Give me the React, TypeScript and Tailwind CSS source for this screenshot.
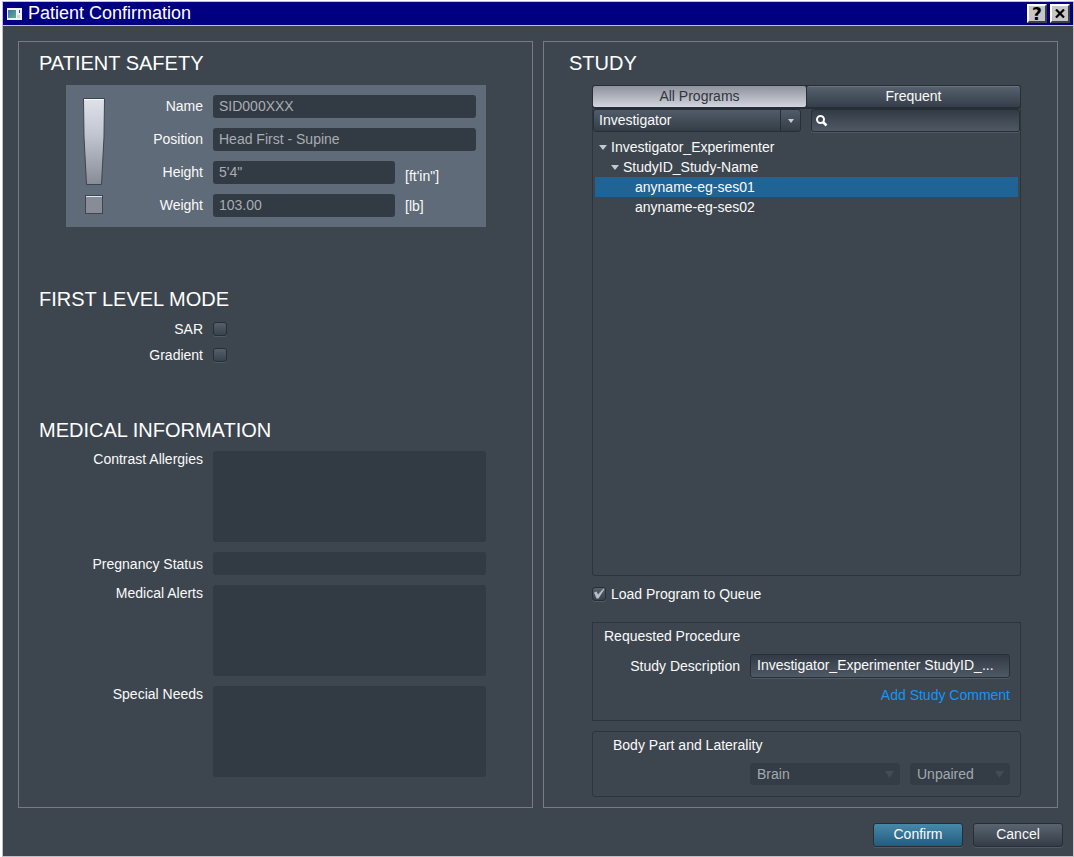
import { useState } from "react";
import type { ReactNode } from "react";

const readOnlyField =
  "h-[23px] w-full min-w-0 rounded-[3px] bg-[#323b44] px-1.5 pb-0.5 text-[#a9adb2] outline-none";

function Heading({ children }: { children: ReactNode }) {
  return <h2 className="text-xl leading-7 font-normal text-white">{children}</h2>;
}

function AlertMark() {
  return (
    <svg width="24" height="120" viewBox="0 0 24 120" aria-hidden="true">
      <defs>
        <linearGradient id="mark" x1="0" y1="0" x2="0" y2="1">
          <stop offset="0" stopColor="#dfe2ea" />
          <stop offset="0.4" stopColor="#c3c7d2" />
          <stop offset="1" stopColor="#888c97" />
        </linearGradient>
      </defs>
      <path
        d="M1.5 3.5H22.500L22 42L19.500 89.500H4.500L2 42Z"
        fill="url(#mark)"
        stroke="#3d464f"
      />
      <path d="M2 4.500H22" stroke="#f6f7fa" />
      <rect x="3.500" y="100.500" width="17" height="18" fill="#888c97" stroke="#3d464f" />
      <path d="M4 101.500H20" stroke="#e3e5ea" />
    </svg>
  );
}

function SafetyField(props: { id: string; label: string; value: string; unit?: string; unitClass?: string }) {
  return (
    <div className="grid grid-cols-[127px_1fr] gap-2.5">
      <label htmlFor={props.id} className="text-right leading-[23px]">
        {props.label}
      </label>
      <div className={props.unit ? "grid grid-cols-[182px_1fr] gap-2.5" : "flex"}>
        <input id={props.id} readOnly value={props.value} className={readOnlyField} />
        {props.unit && <span className={props.unitClass}>{props.unit}</span>}
      </div>
    </div>
  );
}

function CheckBox({ id, initial = false }: { id: string; initial?: boolean }) {
  const [checked, setChecked] = useState(initial);
  return (
    <span className="relative flex size-3.5 shrink-0">
      <input
        id={id}
        type="checkbox"
        checked={checked}
        onChange={() => setChecked(!checked)}
        className="size-3.5 appearance-none rounded-[3px] border border-[#272e35] bg-linear-to-b from-[#56606d] to-[#38424c] shadow-[0_1px_0_#515a64]"
      />
      {checked && (
        <svg
          className="pointer-events-none absolute inset-0"
          width="14"
          height="14"
          viewBox="0 0 14 14"
          aria-hidden="true"
        >
          <path d="M2 5.500L4.500 4.500L6 7.500L11.500 1.500L12.500 2L6.500 11.500H4.500Z" fill="#b9bdc9" />
        </svg>
      )}
    </span>
  );
}

function MedicalArea({ id, label }: { id: string; label: string }) {
  return (
    <div className="grid grid-cols-[164px_1fr] gap-2.5">
      <label htmlFor={id} className="text-right">
        {label}
      </label>
      <textarea
        id={id}
        readOnly
        className="block h-[91px] w-full resize-none rounded-[3px] bg-[#323b44] p-1.5 outline-none"
      />
    </div>
  );
}

function TreeArrow() {
  return (
    <svg width="8" height="5" viewBox="0 0 8 5" aria-hidden="true" className="shrink-0">
      <path d="M0 0H8L4 5Z" fill="#c3c8d0" />
    </svg>
  );
}

function DisabledSelect({ label, option, className }: { label: string; option: string; className: string }) {
  return (
    <div className={className}>
      <select
        disabled
        aria-label={label}
        className="h-[22px] w-full appearance-none rounded-[3px] bg-[#343d46] px-[7px] text-[#a3a8ad] opacity-100"
      >
        <option>{option}</option>
      </select>
      <svg
        className="pointer-events-none absolute top-2 right-1.5"
        width="9"
        height="7"
        viewBox="0 0 9 7"
        aria-hidden="true"
      >
        <path d="M0 0H9L4.500 7Z" fill="#434c55" />
      </svg>
    </div>
  );
}

const sessions = ["anyname-eg-ses01", "anyname-eg-ses02"];

export default function App() {
  const [selected, setSelected] = useState(sessions[0]);
  const [tab, setTab] = useState("All Programs");

  return (
    <div className="flex min-h-screen flex-col bg-white pt-px pl-0.5 font-['Liberation_Sans',Arial,sans-serif] text-sm leading-4 text-[#fafafa]">
      <div className="flex grow flex-col border border-[#c0c1c8] bg-[#3d464f]">
        <header className="flex h-6 items-center border-b border-[#c0c1d8] bg-[#000080] pr-[3px] pl-1">
          <svg width="15" height="12" viewBox="0 0 15 12" aria-hidden="true">
            <defs>
              <linearGradient id="app" x1="0" y1="0" x2="1" y2="1">
                <stop offset="0" stopColor="#3c6fa8" />
                <stop offset="1" stopColor="#5fb487" />
              </linearGradient>
            </defs>
            <rect width="15" height="12" fill="#f2f2f4" />
            <rect x="1" y="2" width="8" height="8" fill="url(#app)" />
            <rect x="12" y="2" width="1" height="3" fill="#2f4f8f" />
            <rect x="10" y="7" width="3" height="3" fill="#d4d6da" />
          </svg>
          <h1 className="ml-1.5 grow pb-0.5 text-lg leading-5 text-white">Patient Confirmation</h1>
          <div className="flex gap-[3px]">
            <button
              aria-label="Help"
              className="flex h-[19px] w-5 items-center justify-center border-2 border-t-white border-r-[#404040] border-b-[#404040] border-l-white bg-[#c6c6c6] font-['DejaVu_Sans',sans-serif] text-[17px] leading-4 font-bold text-black"
            >
              ?
            </button>
            <button
              aria-label="Close"
              className="flex h-[19px] w-5 items-center justify-center border-2 border-t-white border-r-[#404040] border-b-[#404040] border-l-white bg-[#c6c6c6]"
            >
              <svg width="10" height="9" viewBox="0 0 10 9" aria-hidden="true">
                <path d="M1 0.500L9 8.500M9 0.500L1 8.500" stroke="#000" strokeWidth="2.200" />
              </svg>
            </button>
          </div>
        </header>

        <main className="grid grow grid-cols-2 gap-2.5 px-[15px] pt-[15px]">
          <div className="min-w-0 border border-[#777b7e] pt-[7px] pr-[46px] pb-[30px] pl-5">
            <section>
              <Heading>PATIENT SAFETY</Heading>
              <div className="mt-2 ml-[27px] flex bg-[#5f6b79] p-2.5 pl-4">
                <div className="w-0">
                  <AlertMark />
                </div>
                <div className="-ml-1.5 flex grow flex-col gap-2.5">
                  <SafetyField id="name" label="Name" value="SID000XXX" />
                  <SafetyField id="position" label="Position" value="Head First - Supine" />
                  <SafetyField id="height" label="Height" value={"5'4\""} unit={"[ft'in\"]"} unitClass="self-end" />
                  <SafetyField id="weight" label="Weight" value="103.00" unit="[lb]" unitClass="self-center" />
                </div>
              </div>
            </section>

            <section className="mt-[58px]">
              <Heading>FIRST LEVEL MODE</Heading>
              <div className="mt-2 flex flex-col gap-2.5">
                <div className="grid grid-cols-[164px_1fr] items-center gap-2.5">
                  <label htmlFor="sar" className="text-right">
                    SAR
                  </label>
                  <CheckBox id="sar" />
                </div>
                <div className="grid grid-cols-[164px_1fr] items-center gap-2.5">
                  <label htmlFor="gradient" className="text-right">
                    Gradient
                  </label>
                  <CheckBox id="gradient" />
                </div>
              </div>
            </section>

            <section className="mt-[53px]">
              <Heading>MEDICAL INFORMATION</Heading>
              <div className="mt-[7px] flex flex-col gap-2.5">
                <MedicalArea id="allergies" label="Contrast Allergies" />
                <div className="grid grid-cols-[164px_1fr] items-center gap-2.5">
                  <label htmlFor="pregnancy" className="text-right">
                    Pregnancy Status
                  </label>
                  <input id="pregnancy" readOnly className={readOnlyField} />
                </div>
                <MedicalArea id="alerts" label="Medical Alerts" />
                <MedicalArea id="needs" label="Special Needs" />
              </div>
            </section>
          </div>

          <section className="flex min-w-0 flex-col border border-[#777b7e] pt-[7px] pr-9 pb-2.5 pl-12">
            <div className="-ml-[23px]">
              <Heading>STUDY</Heading>
            </div>
            <div className="mt-2 flex h-6 gap-px rounded-[3px] border border-b-2 border-[#272e35] bg-[#272e35]">
              {["All Programs", "Frequent"].map((name) => (
                <button
                  key={name}
                  onClick={() => setTab(name)}
                  className={
                    tab === name
                      ? "flex-1 rounded-[2px] bg-linear-to-b from-[#8f919c] to-[#d3d6de] pb-px text-[#30363d]"
                      : "flex-1 rounded-[2px] border-t border-[#69727f] bg-linear-to-b from-[#56606e] to-[#353e48] pb-0.5"
                  }
                >
                  {name}
                </button>
              ))}
            </div>
            <div className="flex grow flex-col rounded-b-[3px] border border-t-0 border-[#2d353c]">
              <div className="flex gap-2.5">
                <div className="relative w-[208px] shrink-0">
                  <select
                    aria-label="Program owner"
                    className="block h-[23px] w-full appearance-none rounded-[3px] border border-[#272e35] bg-linear-to-b from-[#525c69] to-[#343d47] px-[5px] pb-0.5 text-[#fafafa]"
                  >
                    <option>Investigator</option>
                  </select>
                  <span className="pointer-events-none absolute top-px right-px bottom-px flex w-5 items-center justify-center border-l border-[#272e35]">
                    <svg width="6" height="4" viewBox="0 0 6 4" aria-hidden="true">
                      <path d="M0 0H6L3 4Z" fill="#c9cdd5" />
                    </svg>
                  </span>
                </div>
                <div className="relative min-w-0 grow">
                  <input
                    aria-label="Search programs"
                    className="block h-[23px] w-full rounded-[3px] border border-[#272e35] bg-linear-to-b from-[#323b44] to-[#4f5966] pr-1.5 pl-6 shadow-[0_1px_0_#515a64] outline-none"
                  />
                  <svg
                    className="pointer-events-none absolute top-1.5 left-[5px]"
                    width="12"
                    height="12"
                    viewBox="0 0 12 12"
                    aria-hidden="true"
                  >
                    <circle cx="4.500" cy="4.500" r="3.500" fill="none" stroke="#fff" strokeWidth="2" />
                    <path d="M7 7L10.500 10.500" stroke="#fff" strokeWidth="2.500" />
                  </svg>
                </div>
              </div>
              <ul role="tree" className="mt-[5px] flex flex-col px-0.5 leading-5">
                <li role="treeitem" aria-expanded="true" className="flex items-center gap-1 pl-1">
                  <TreeArrow />
                  Investigator_Experimenter
                </li>
                <li role="treeitem" aria-expanded="true" className="flex items-center gap-1 pl-4">
                  <TreeArrow />
                  StudyID_Study-Name
                </li>
                {sessions.map((name) => (
                  <li role="treeitem" aria-selected={selected === name} key={name} className="flex">
                    <button
                      onClick={() => setSelected(name)}
                      className={
                        selected === name
                          ? "h-5 grow bg-[#206496] pl-10 text-left"
                          : "h-5 grow pl-10 text-left"
                      }
                    >
                      {name}
                    </button>
                  </li>
                ))}
              </ul>
            </div>

            <div className="mt-2.5 flex items-center gap-[5px]">
              <CheckBox id="queue" initial />
              <label htmlFor="queue">Load Program to Queue</label>
            </div>

            <section className="mt-5 border border-[#2d353c] pt-[5px] pr-2.5 pb-[17px] pl-[11px]">
              <h3>Requested Procedure</h3>
              <div className="mt-2.5 grid grid-cols-[136px_1fr] items-center gap-2.5">
                <label htmlFor="description" className="text-right">
                  Study Description
                </label>
                <input
                  id="description"
                  readOnly
                  value="Investigator_Experimenter StudyID_..."
                  className="h-6 w-full min-w-0 rounded-[3px] border border-[#272e35] bg-linear-to-b from-[#323b44] to-[#4f5966] px-1.5 pb-0.5 shadow-[0_1px_0_#515a64] outline-none"
                />
              </div>
              <div className="mt-[9px] text-right">
                <a href="#comment" className="text-[#1495f5]">
                  Add Study Comment
                </a>
              </div>
            </section>

            <section className="mt-2.5 rounded-[3px] border border-[#2d353c] pt-[5px] pr-2.5 pb-[11px] pl-5">
              <h3>Body Part and Laterality</h3>
              <div className="mt-2.5 ml-[137px] flex gap-2.5">
                <DisabledSelect label="Body part" option="Brain" className="relative grow" />
                <DisabledSelect label="Laterality" option="Unpaired" className="relative w-[100px]" />
              </div>
            </section>
          </section>
        </main>

        <footer className="flex justify-end gap-2.5 px-2.5 pt-[15px] pb-[9px]">
          <button className="h-6 w-[90px] rounded-[3px] border border-[#272e35] bg-linear-to-b from-[#4788a8] to-[#245c7e] pb-0.5 shadow-[0_1px_0_#515a64]">
            Confirm
          </button>
          <button className="h-6 w-[90px] rounded-[3px] border border-[#272e35] bg-linear-to-b from-[#5a6470] to-[#343d47] pb-0.5 shadow-[0_1px_0_#515a64]">
            Cancel
          </button>
        </footer>
      </div>
    </div>
  );
}
